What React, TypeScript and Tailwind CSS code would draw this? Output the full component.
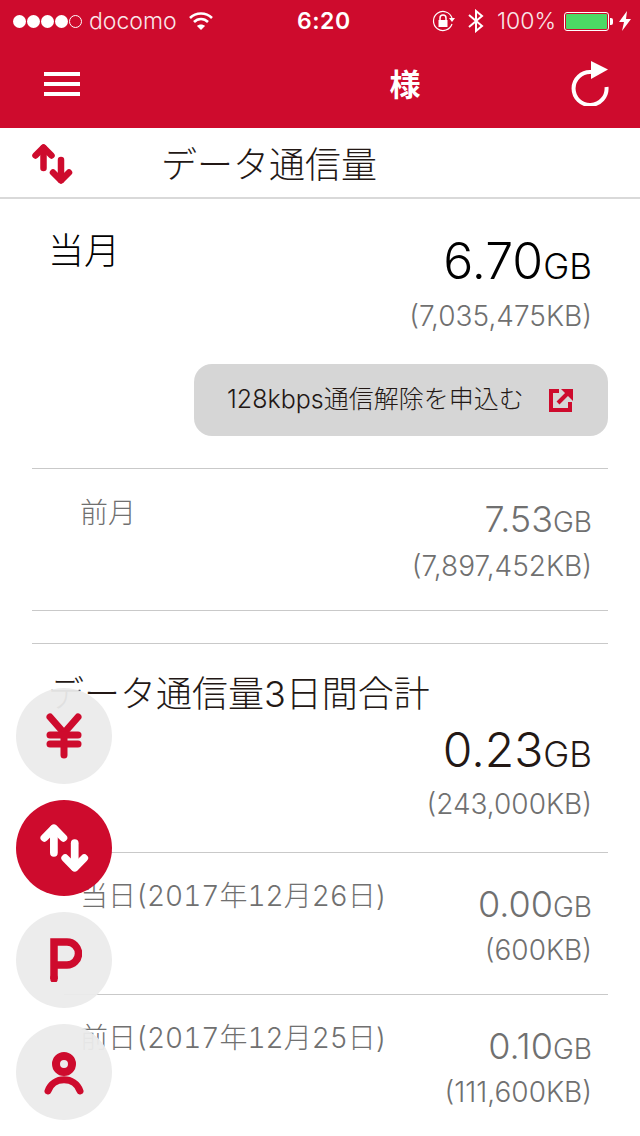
import React from "react";

const RED = "#ce0b2d";

const ArrowsIcon = ({ color, className }: { color: string; className: string }) => (
  <svg viewBox="0 0 42 42" className={className} fill="none" stroke={color} strokeLinecap="round" strokeLinejoin="round" strokeWidth="6.5">
    <path d="M12.5 5 V25" />
    <path d="M4.5 12.5 L12.5 4.5 L20.5 12.5" />
    <path d="M30 17 V37" />
    <path d="M22 29.5 L30 37.5 L38 29.5" />
  </svg>
);

const StatusBar = () => (
  <div className="h-[40px] flex items-center justify-between pl-[13px] pr-[9px] pt-[2px] text-white text-[23px] relative">
    <div className="flex items-center">
      <div className="flex gap-[1px]">
        {[0, 1, 2, 3].map((i) => (
          <span key={i} className="w-[13px] h-[13px] rounded-full bg-white" />
        ))}
        <span className="w-[13px] h-[13px] rounded-full border border-white" />
      </div>
      <span className="ml-[7px] font-light opacity-90">docomo</span>
      <svg viewBox="0 0 26 20" className="ml-[11px] w-[26px] h-[20px]" fill="none" stroke="white" strokeWidth="2.6">
        <path d="M2 7 C8 1 18 1 24 7" />
        <path d="M6 11 C10 7 16 7 20 11" />
        <path d="M9 15 L13 19 L17 15 C15 13 11 13 9 15 Z" fill="white" stroke="none" />
      </svg>
    </div>
    <div className="absolute left-[297px] top-[4px] font-semibold text-[23px] tracking-[0.5px]">6:20</div>
    <div className="flex items-center">
      <svg viewBox="0 0 24 22" className="w-[24px] h-[22px]" fill="none" stroke="white" strokeWidth="1.2">
        <path d="M20 14 A9.5 9.5 0 1 1 20 8" />
        <path d="M17 8 H23 L20 12 Z" fill="white" stroke="none" />
        <rect x="6.5" y="10" width="9" height="7" fill="white" stroke="none" />
        <path d="M8 10 V8 A3 3 0 0 1 14 8 V10" strokeWidth="1.5" />
      </svg>
      <svg viewBox="0 0 18 24" className="ml-[11px] w-[18px] h-[24px]" fill="none" stroke="white" strokeWidth="2">
        <path d="M2 6 L15 17 L9 22 V2 L15 7 L2 18" />
      </svg>
      <span className="ml-[12px] font-light opacity-90 text-[23px]">100%</span>
      <div className="ml-[8px] w-[45px] h-[19px] border border-white rounded-[3px] p-[1px]">
        <div className="w-full h-full bg-[#4cd964] rounded-[1px]" />
      </div>
      <span className="ml-[1px] w-[3px] h-[7px] bg-white rounded-r-[2px]" />
      <svg viewBox="0 0 12 20" className="ml-[6px] w-[12px] h-[20px]" fill="white">
        <path d="M8 0 L0 11 H5 L3 20 L12 8 H7 Z" />
      </svg>
    </div>
  </div>
);

const Header = () => (
  <div className="h-[88px] relative flex items-center justify-center pt-[2px]">
    <div className="absolute left-[44px] top-[32px] w-[36px] h-[24px] flex flex-col justify-between">
      <span className="h-[4px] bg-white" />
      <span className="h-[4px] bg-white" />
      <span className="h-[4px] bg-white" />
    </div>
    <span className="text-white font-bold text-[31px] ml-[170px]">様</span>
    <svg viewBox="0 0 40 46" className="absolute left-[570px] top-[20px] w-[40px] h-[46px]" fill="none">
      <path d="M21 12 A16.5 16.5 0 1 0 36.5 27" stroke="white" strokeWidth="4" />
      <path d="M21 1 L38 9.5 L21 19 Z" fill="white" />
    </svg>
  </div>
);

const SubRow = ({ label, value, kb, last }: { label: string; value: string; kb: string; last?: boolean }) => (
  <div className={`h-[142px] ml-[64px] mr-[32px] flex justify-between ${last ? "" : "border-b border-[#c9c9c9]"}`}>
    <div className="pl-[16px] pt-[25px] text-[28px] leading-[36px] text-[#707070] font-light whitespace-nowrap tabular-nums">{label}</div>
    <div className="flex flex-col items-end pt-[33px] pr-[16px] text-[#707070] font-light">
      <div className="leading-none whitespace-nowrap">
        <span className="text-[36px]">{value}</span>
        <span className="text-[28px]">GB</span>
      </div>
      <div className="mt-[12px] text-[28px] leading-[32px] whitespace-nowrap">{kb}</div>
    </div>
  </div>
);

const RoundButton = ({ active, children }: { active?: boolean; children: React.ReactNode }) => (
  <div className={`w-[96px] h-[96px] rounded-full flex items-center justify-center ${active ? "bg-[#ce0b2d]" : "bg-[#ebebeb]/95"}`}>
    {children}
  </div>
);

export default function App() {
  return (
    <div
      className="w-[640px] h-[1136px] bg-white overflow-hidden relative"
      style={{ fontFamily: '"Inter", "Noto Sans CJK JP", sans-serif' }}
    >
      <div className="bg-[#ce0b2d] h-[128px]">
        <StatusBar />
        <Header />
      </div>

      <div className="h-[71px] border-b-2 border-[#d9d9d9] flex items-center">
        <ArrowsIcon color={RED} className="ml-[31px] mt-[2px] w-[42px] h-[42px]" />
        <span className="ml-[88px] mt-[4px] text-[36px] font-light text-[#231815]">データ通信量</span>
      </div>

      <div className="h-[270px] mx-[32px] border-b border-[#c9c9c9]">
        <div className="flex justify-between">
          <div className="pl-[16px] pt-[29px] text-[36px] leading-[46px] font-light text-black">当月</div>
          <div className="flex flex-col items-end pr-[16px]">
            <div className="pt-[37px] leading-none text-black font-light whitespace-nowrap">
              <span className="text-[50px]">6.70</span>
              <span className="text-[35px]">GB</span>
            </div>
            <div className="mt-[14px] text-[28px] leading-[32px] text-[#707070] font-light">(7,035,475KB)</div>
          </div>
        </div>
        <div className="ml-[162px] mt-[32px] h-[72px] rounded-[18px] bg-[#d6d6d6] flex items-center pl-[33px]">
          <span className="text-[25px] font-light text-[#231815] whitespace-nowrap">128kbps通信解除を申込む</span>
          <svg viewBox="0 0 24 24" className="ml-[25px] w-[24px] h-[24px]" fill="none" stroke={RED}>
            <path d="M10 3 H2 V22 H21 V14" strokeWidth="4" />
            <path d="M9 15 L19 5" strokeWidth="4" />
            <path d="M12 1 H24 V13 Z" fill={RED} stroke="none" />
          </svg>
        </div>
      </div>

      <div className="h-[142px] mx-[32px] border-b border-[#c9c9c9] flex justify-between">
        <div className="pl-[48px] pt-[26px] text-[28px] leading-[36px] text-[#707070] font-light">前月</div>
        <div className="flex flex-col items-end pt-[32px] pr-[16px] text-[#707070] font-light">
          <div className="leading-none whitespace-nowrap">
            <span className="text-[36px]">7.53</span>
            <span className="text-[28px]">GB</span>
          </div>
          <div className="mt-[13px] text-[28px] leading-[32px]">(7,897,452KB)</div>
        </div>
      </div>

      <div className="mt-[32px] mx-[32px] h-[210px] border-t border-b border-[#c9c9c9]">
        <div className="pl-[16px] pt-[27px] text-[36px] leading-[46px] font-light text-[#231815] whitespace-nowrap">データ通信量3日間合計</div>
        <div className="flex flex-col items-end pr-[16px] text-[#231815] font-light">
          <div className="mt-[9px] leading-none whitespace-nowrap">
            <span className="text-[48px]">0.23</span>
            <span className="text-[35px]">GB</span>
          </div>
          <div className="mt-[14px] text-[28px] leading-[32px] text-[#707070]">(243,000KB)</div>
        </div>
      </div>

      <SubRow label="当日(2017年12月26日)" value="0.00" kb="(600KB)" />
      <SubRow label="前日(2017年12月25日)" value="0.10" kb="(111,600KB)" last />

      {/* floating side menu */}
      <div className="absolute left-[16px] top-[688px] flex flex-col gap-[16px]">
        <RoundButton>
          <svg viewBox="0 0 36 46" className="w-[36px] h-[46px]" fill="none" stroke={RED} strokeWidth="7" strokeLinecap="round">
            <path d="M4 4 L18 20 L32 4" />
            <path d="M18 20 V42" />
            <path d="M4 22 H32" />
            <path d="M4 31 H32" />
          </svg>
        </RoundButton>
        <RoundButton active>
          <ArrowsIcon color="white" className="w-[50px] h-[50px]" />
        </RoundButton>
        <RoundButton>
          <svg viewBox="0 0 32 44" className="ml-[4px] w-[32px] h-[44px]" fill="none" stroke={RED} strokeWidth="7.5" strokeLinecap="round">
            <path d="M4 41 V4 H17 A11.5 11.5 0 0 1 17 27 H4" strokeLinecap="butt" />
            <path d="M4 40 V41" />
          </svg>
        </RoundButton>
        <RoundButton>
          <svg viewBox="0 0 40 44" className="w-[40px] h-[44px] mt-[4px]" fill="none" stroke={RED} strokeLinecap="round">
            <circle cx="20" cy="12" r="8" strokeWidth="8" />
            <path d="M4 39 C9 24 31 24 36 39" strokeWidth="7" />
          </svg>
        </RoundButton>
      </div>
    </div>
  );
}
